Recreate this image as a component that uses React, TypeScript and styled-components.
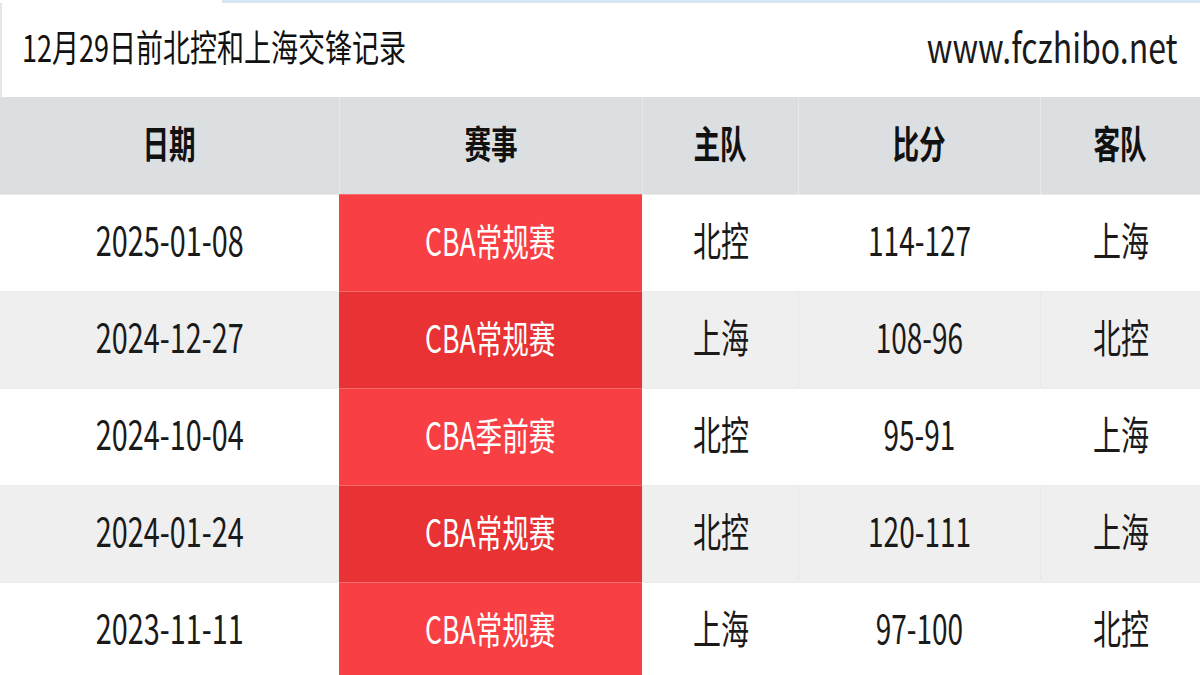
import React from "react";
import styled, { createGlobalStyle } from "styled-components";

const Global = createGlobalStyle`
  html, body { margin: 0; padding: 0; background: #ffffff; }
  body { font-family: "Noto Sans CJK SC", "Noto Sans", sans-serif; overflow: hidden; }
`;

const Page = styled.div`
  width: 1200px;
  height: 675px;
  overflow: hidden;
  background: #ffffff;
  display: flex;
  flex-direction: column;
  & > * { flex-shrink: 0; }
`;

const TopStrip = styled.div`
  height: 3px;
  display: flex;
`;

const StripBlank = styled.div`
  width: 222px;
`;

const StripBlue = styled.div`
  flex: 1;
  background: #d6e6f3;
`;

const TitleBar = styled.div`
  height: 94px;
  display: flex;
  align-items: center;
  justify-content: space-between;
  padding: 0 22px 0 20px;
  border-left: 2px solid #e6e6e6;
  box-sizing: border-box;
`;

const Squeeze = styled.span<{ $origin?: string; $scale?: number }>`
  display: inline-block;
  white-space: nowrap;
  transform: scaleX(${(p) => p.$scale ?? 0.7});
  transform-origin: ${(p) => p.$origin ?? "center"};
`;

const Title = styled.div`
  font-size: 37px;
  color: #111111;
  line-height: 1;
  margin-top: -8px;
`;

const Site = styled.div`
  font-size: 40px;
  color: #1a1a1a;
  line-height: 1;
  margin-top: -8px;
`;

const Table = styled.div`
  display: grid;
  grid-template-columns: 339px 303px 156px 242px 1fr;
  grid-auto-rows: 97px;
`;

const HeadCell = styled.div<{ $first?: boolean }>`
  background: #dcdfe2;
  display: flex;
  align-items: center;
  justify-content: center;
  font-size: 38px;
  font-weight: 700;
  color: #111111;
  border-left: ${(p) => (p.$first ? "none" : "1px solid #e6e8ea")};
  padding-bottom: 8px;
  box-sizing: border-box;
`;

const Cell = styled.div<{ $alt: boolean; $first?: boolean }>`
  background: ${(p) => (p.$alt ? "#f0eff0" : "#ffffff")};
  display: flex;
  align-items: center;
  justify-content: center;
  font-size: 40px;
  color: #1a1a1a;
  border-top: 1px solid #ebebeb;
  border-left: ${(p) => (p.$first ? "none" : `1px solid ${p.$alt ? "#e9e8e9" : "#ffffff"}`)};
  box-sizing: border-box;
  padding-bottom: 8px;
`;

const MatchCell = styled.div<{ $alt: boolean }>`
  background: ${(p) => (p.$alt ? "#e83234" : "#f84044")};
  display: flex;
  align-items: center;
  justify-content: center;
  font-size: 38px;
  color: #ffffff;
  border-top: 1px solid #f96a6c;
  box-sizing: border-box;
  padding-bottom: 8px;
`;

const rows = [
  { date: "2025-01-08", match: "CBA常规赛", home: "北控", score: "114-127", away: "上海" },
  { date: "2024-12-27", match: "CBA常规赛", home: "上海", score: "108-96", away: "北控" },
  { date: "2024-10-04", match: "CBA季前赛", home: "北控", score: "95-91", away: "上海" },
  { date: "2024-01-24", match: "CBA常规赛", home: "北控", score: "120-111", away: "上海" },
  { date: "2023-11-11", match: "CBA常规赛", home: "上海", score: "97-100", away: "北控" },
];

export default function App() {
  return (
    <Page>
      <Global />
      <TopStrip>
        <StripBlank />
        <StripBlue />
      </TopStrip>
      <TitleBar>
        <Title>
          <Squeeze $origin="left" $scale={0.73}>12月29日前北控和上海交锋记录</Squeeze>
        </Title>
        <Site>
          <Squeeze $origin="right" $scale={0.8}>www.fczhibo.net</Squeeze>
        </Site>
      </TitleBar>
      <Table>
        <HeadCell $first><Squeeze>日期</Squeeze></HeadCell>
        <HeadCell><Squeeze>赛事</Squeeze></HeadCell>
        <HeadCell><Squeeze>主队</Squeeze></HeadCell>
        <HeadCell><Squeeze>比分</Squeeze></HeadCell>
        <HeadCell><Squeeze>客队</Squeeze></HeadCell>
        {rows.map((r, i) => {
          const alt = i % 2 === 1;
          return (
            <React.Fragment key={i}>
              <Cell $alt={alt} $first><Squeeze $scale={0.72}>{r.date}</Squeeze></Cell>
              <MatchCell $alt={alt}><Squeeze>{r.match}</Squeeze></MatchCell>
              <Cell $alt={alt}><Squeeze>{r.home}</Squeeze></Cell>
              <Cell $alt={alt}><Squeeze>{r.score}</Squeeze></Cell>
              <Cell $alt={alt}><Squeeze>{r.away}</Squeeze></Cell>
            </React.Fragment>
          );
        })}
      </Table>
    </Page>
  );
}
